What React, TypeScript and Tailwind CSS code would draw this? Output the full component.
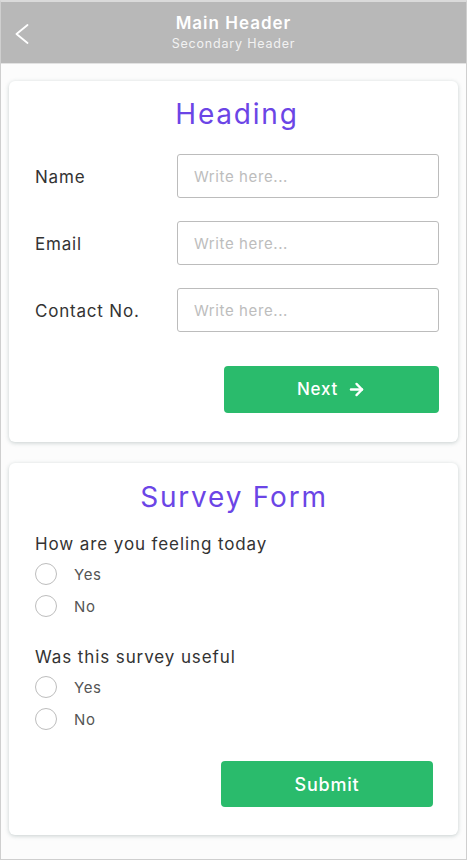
import React from 'react';
import { ArrowRight } from 'lucide-react';

const font = { fontFamily: 'Inter, "Open Sans", sans-serif' };

// Rows of the contact form
const fields = ['Name', 'Email', 'Contact No.'];

// Survey questions, each with the same two answers
const questions = ['How are you feeling today', 'Was this survey useful'];

const Radio = ({ label, name }: { label: string; name: string }) => (
  <label className="flex items-center gap-[17px] h-[22px]">
    <input type="radio" name={name} className="appearance-none w-[22px] h-[22px] rounded-full border border-[#bdbdbd] bg-white" />
    <span className="text-[15px] text-[#555] tracking-[0.6px] pt-[2px]">{label}</span>
  </label>
);

const App = () => {
  return (
    <div className="w-[467px] h-[860px] bg-[#fcfcfc] border-x border-b border-t-2 border-x-[#cfcfcf] border-b-[#cfcfcf] border-t-[#dadada] flex flex-col" style={font}>
      {/* Top bar */}
      <div className="relative h-[62px] bg-[#b8b8b8] border-b border-[#e2e2e2] flex flex-col items-center justify-center text-white">
        <button className="absolute left-[14px] top-[22px] text-white">
          <svg width="14" height="20" viewBox="0 0 14 20" fill="none" stroke="currentColor" strokeWidth="1.8" strokeLinecap="round" strokeLinejoin="round">
            <polyline points="12.5,1 1.5,10 12.5,19" />
          </svg>
        </button>
        <div className="text-[17px] font-semibold leading-[22px] tracking-[1px]">Main Header</div>
        <div className="text-[12.5px] leading-[20px] text-[#f2f2f2] tracking-[0.8px]">Secondary Header</div>
      </div>

      <div className="flex flex-col gap-[21px] px-2 pt-[17px]">
        {/* Contact card */}
        <div className="bg-white rounded-md shadow-[0_1px_4px_rgba(60,90,90,0.28)] pl-[26px] pr-[19px] pt-[16px] pb-[29px]">
          <h1 className="text-center text-[28px] leading-[34px] text-[#6b45e6] tracking-[1.8px]">Heading</h1>
          <div className="mt-[23px] flex flex-col gap-[23px]">
            {fields.map((f) => (
              <div key={f} className="flex items-center">
                <span className="w-[143px] pt-[3px] text-[17px] text-[#333] tracking-[0.8px]">{f}</span>
                <input
                  placeholder="Write here..."
                  className="w-[262px] h-[44px] border border-[#bcbcbc] rounded-[3px] px-[16px] text-[15px] tracking-[0.6px] placeholder:text-[#bdbdbd] outline-none"
                />
              </div>
            ))}
          </div>
          <div className="mt-[34px] flex justify-end">
            <button className="w-[215px] h-[47px] bg-[#2abb6c] rounded-[4px] text-white text-[17px] font-medium tracking-[0.8px] flex items-center justify-center gap-[9px]">
              Next
              <ArrowRight size={19} strokeWidth={3} />
            </button>
          </div>
        </div>

        {/* Survey card */}
        <div className="bg-white rounded-md shadow-[0_1px_4px_rgba(60,90,90,0.28)] pl-[26px] pr-[25px] pt-[17px] pb-[28px]">
          <h2 className="text-center text-[28px] leading-[34px] text-[#6b45e6] tracking-[1.8px]">Survey Form</h2>
          <div className="flex flex-col gap-[28px] mt-[18px]">
            {questions.map((q, i) => (
              <div key={q}>
                <div className="text-[17px] leading-[24px] text-[#333] tracking-[0.9px]">{q}</div>
                <div className="mt-[7px] flex flex-col gap-[10px]">
                  <Radio label="Yes" name={`q${i}`} />
                  <Radio label="No" name={`q${i}`} />
                </div>
              </div>
            ))}
          </div>
          <div className="mt-[31px] flex justify-end">
            <button className="w-[212px] h-[46px] bg-[#2abb6c] rounded-[4px] text-white text-[18px] font-medium tracking-[0.8px]">Submit</button>
          </div>
        </div>
      </div>
    </div>
  );
};

export default App;
